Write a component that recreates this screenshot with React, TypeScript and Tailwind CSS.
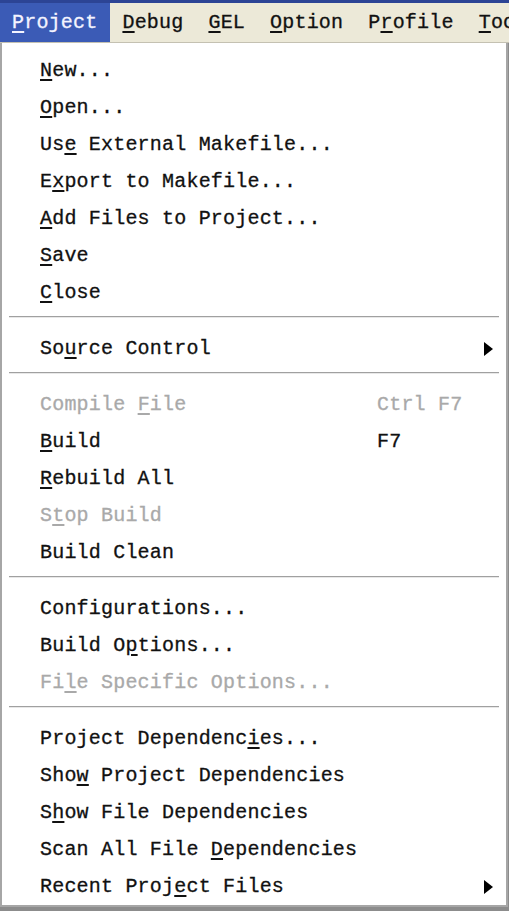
type Item =
  | { kind: "sep" }
  | {
      kind: "item";
      label: string;
      key?: number;
      shortcut?: string;
      disabled?: boolean;
      submenu?: boolean;
    };

const items: Item[] = [
  { kind: "item", label: "New...", key: 0 },
  { kind: "item", label: "Open...", key: 0 },
  { kind: "item", label: "Use External Makefile...", key: 2 },
  { kind: "item", label: "Export to Makefile...", key: 1 },
  { kind: "item", label: "Add Files to Project...", key: 0 },
  { kind: "item", label: "Save", key: 0 },
  { kind: "item", label: "Close", key: 0 },
  { kind: "sep" },
  { kind: "item", label: "Source Control", key: 2, submenu: true },
  { kind: "sep" },
  { kind: "item", label: "Compile File", key: 8, shortcut: "Ctrl F7", disabled: true },
  { kind: "item", label: "Build", key: 0, shortcut: "F7" },
  { kind: "item", label: "Rebuild All", key: 0 },
  { kind: "item", label: "Stop Build", key: 1, disabled: true },
  { kind: "item", label: "Build Clean" },
  { kind: "sep" },
  { kind: "item", label: "Configurations..." },
  { kind: "item", label: "Build Options...", key: 7 },
  { kind: "item", label: "File Specific Options...", key: 2, disabled: true },
  { kind: "sep" },
  { kind: "item", label: "Project Dependencies...", key: 17 },
  { kind: "item", label: "Show Project Dependencies", key: 3 },
  { kind: "item", label: "Show File Dependencies", key: 1 },
  { kind: "item", label: "Scan All File Dependencies", key: 14 },
  { kind: "item", label: "Recent Project Files", key: 11, submenu: true },
];

const menus = [
  { label: "Project", key: 0 },
  { label: "Debug", key: 0 },
  { label: "GEL", key: 0 },
  { label: "Option", key: 0 },
  { label: "Profile", key: 1 },
  { label: "Tools", key: 0 },
];

function Mnemonic({ text, at }: { text: string; at?: number }) {
  if (at === undefined) return <>{text}</>;
  return (
    <>
      {text.slice(0, at)}
      <span className="underline underline-offset-[3px] decoration-[1.5px]">{text[at]}</span>
      {text.slice(at + 1)}
    </>
  );
}

function Arrow() {
  return (
    <svg width="9" height="14" viewBox="0 0 9 14" className="block">
      <path d="M0 0 L9 7 L0 14 Z" fill="#000" />
    </svg>
  );
}

export default function App() {
  return (
    <div
      className="h-[911px] w-[509px] overflow-hidden bg-[#8c8c8c] text-[20px] tracking-[0.2px] [-webkit-text-stroke:0.3px]"
      style={{ fontFamily: '"Liberation Mono", "DejaVu Sans Mono", monospace' }}
    >
      <div className="h-[3px] bg-[#2c4495]" />
      <div className="flex h-[40px] items-stretch overflow-hidden whitespace-nowrap border-b border-[#c4c1b2] bg-[#ece9d8] text-[#111]">
        {menus.map((m, i) => (
          <div
            key={m.label}
            className={
              i === 0
                ? "flex shrink-0 items-center bg-[#3b5bb6] pl-[12px] pr-[12.5px] text-[#f4f4ff]"
                : "flex shrink-0 items-center px-[12.5px]"
            }
          >
            <Mnemonic text={m.label} at={m.key} />
          </div>
        ))}
      </div>

      <div className="w-[508px] border-x-2 border-b-2 border-[#a6a6a6] bg-white pt-[9px]">
        {items.map((it, i) =>
          it.kind === "sep" ? (
            <div key={i} className="h-[19px] px-[7px] pt-[5px]">
              <div className="h-[1px] bg-[#a0a0a0]" />
              <div className="h-[1px] bg-[#e8e8e8]" />
            </div>
          ) : (
            <div
              key={i}
              className={`flex h-[37px] items-center pl-[38px] ${
                it.disabled ? "text-[#a9a9a9]" : "text-[#111]"
              }`}
            >
              <span className="w-[337px] whitespace-pre">
                <Mnemonic text={it.label} at={it.key} />
              </span>
              <span className="flex-1 whitespace-pre">{it.shortcut}</span>
              {it.submenu && (
                <span className="mr-[13px]">
                  <Arrow />
                </span>
              )}
            </div>
          )
        )}
      </div>
    </div>
  );
}
